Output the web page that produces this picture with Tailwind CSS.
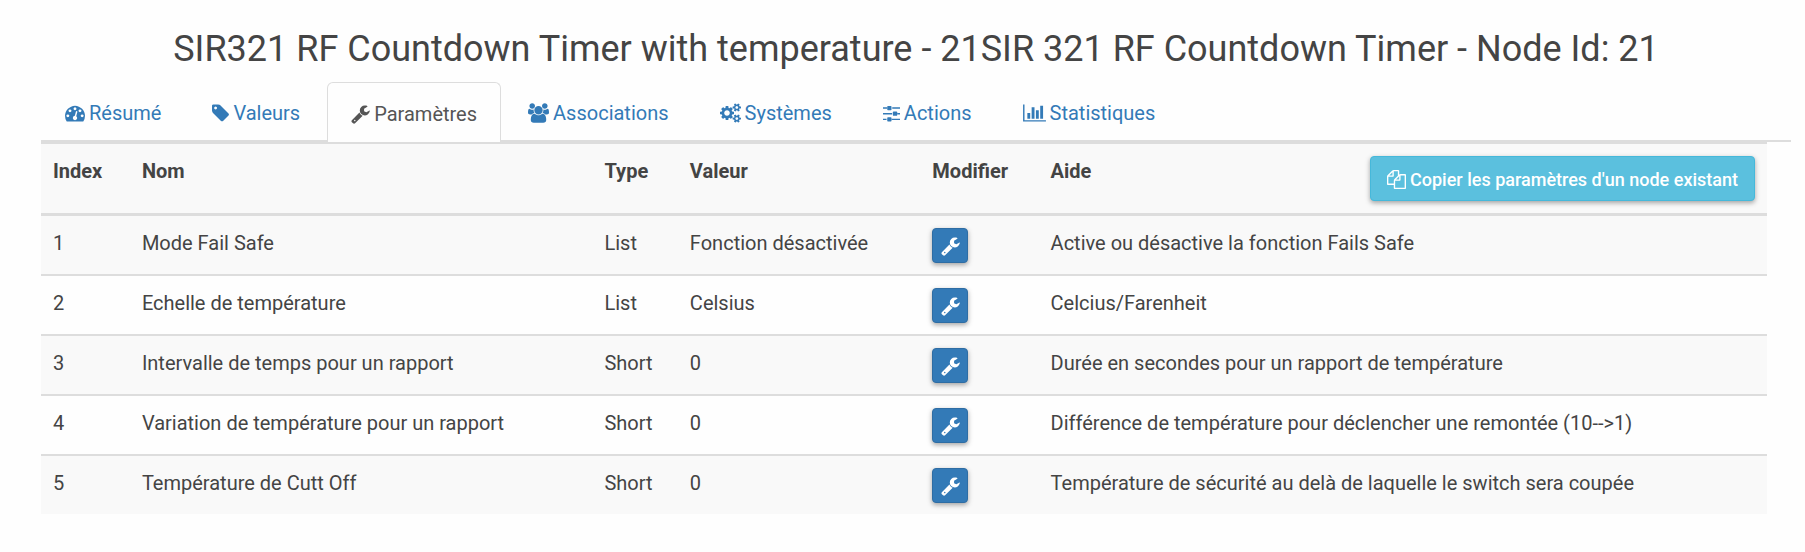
<!DOCTYPE html>
<html lang="fr">
<head>
<meta charset="utf-8">
<meta name="viewport" content="width=device-width, initial-scale=1">
<title>Node Id: 21</title>
<script src="https://cdn.jsdelivr.net/npm/@tailwindcss/browser@4"></script>
</head>
<body class="bg-[#fefefe] font-[Roboto,sans-serif] text-xl leading-[30px] text-[#444]">
<svg class="hidden" aria-hidden="true">
  <symbol id="wrench" viewBox="64 0 1664 1792"><path d="M448 1472q0-26-19-45t-45-19-45 19-19 45 19 45 45 19 45-19 19-45zm644-420l-682 682q-37 37-90 37-52 0-91-37l-106-108q-38-36-38-90 0-53 38-91l681-681q39 98 114.500 173.500t173.500 114.500zm634-435q0 39-23 106-47 134-164.500 217.500t-258.500 83.500q-185 0-316.500-131.500t-131.500-316.500 131.500-316.500 316.500-131.500q58 0 121.500 16.500t107.500 46.500q16 11 16 28t-16 28l-293 169v224l193 107q5-3 79-48.500t135.500-81 70.500-35.500q15 0 23.500 10t8.500 25z"/></symbol>
</svg>
<main class="pl-[41px] pr-[14px] pt-[25px]">
  <h1 class="text-center text-4xl leading-[48px]">SIR321 RF Countdown Timer with temperature - 21SIR 321 RF Countdown Timer - Node Id: 21</h1>

  <nav class="mt-[9px] flex gap-[3px] border-b-2 border-[#ddd] text-[#337ab7]">
    <a href="#resume" class="-mb-[2px] flex h-[60px] items-center gap-1 border border-transparent px-[23px] pt-[2px]">
      <svg class="h-5 w-5 fill-current" viewBox="0 0 1792 1792"><path d="M384 1152q0-53-37.500-90.500t-90.500-37.500-90.500 37.500-37.500 90.500 37.500 90.500 90.500 37.500 90.500-37.500 37.500-90.500zm192-448q0-53-37.500-90.500t-90.500-37.500-90.500 37.500-37.500 90.500 37.500 90.500 90.500 37.500 90.500-37.500 37.500-90.500zm428 481l101-382q6-26-7.500-48.500t-38.500-29.500-48 6.500-30 39.500l-101 382q-60 5-107 43.500t-63 98.500q-20 77 20 146t117 89 146-20 89-117q16-60-6-117t-72-91zm660-33q0-53-37.500-90.500t-90.500-37.500-90.500 37.500-37.500 90.500 37.500 90.500 90.500 37.500 90.500-37.500 37.500-90.500zm-640-640q0-53-37.500-90.500t-90.500-37.500-90.500 37.500-37.500 90.500 37.500 90.500 90.500 37.500 90.500-37.500 37.500-90.500zm448 192q0-53-37.500-90.500t-90.500-37.500-90.500 37.500-37.500 90.500 37.500 90.500 90.500 37.500 90.500-37.500 37.500-90.500zm320 448q0 261-141 483-19 29-54 29h-1402q-35 0-54-29-141-221-141-483 0-182 71-348t191-286 286-191 348-71 348 71 286 191 191 286 71 348z"/></svg>
      Résumé</a>
    <a href="#valeurs" class="-mb-[2px] flex h-[60px] items-center gap-1 border border-transparent px-[23px] pt-[2px]">
      <svg class="h-5 w-[17px] fill-current" viewBox="128 0 1520 1792"><path d="M576 448q0-53-37.500-90.500t-90.500-37.500-90.500 37.500-37.500 90.500 37.500 90.500 90.500 37.500 90.500-37.500 37.500-90.500zm1067 576q0 53-37 90l-491 492q-39 37-91 37-53 0-90-37l-715-716q-38-37-64.500-101t-26.500-117v-416q0-52 38-90t90-38h416q53 0 117 26.500t102 64.500l715 714q37 39 37 91z"/></svg>
      Valeurs</a>
    <a href="#parametres" aria-current="page" class="-mb-[2px] flex h-[60px] items-center gap-1 rounded-t-md border border-b-0 border-[#ddd] bg-[#fefefe] px-[23px] pt-[2px] text-[#555]">
      <svg class="h-5 w-[19px] fill-current"><use href="#wrench"/></svg>
      Paramètres</a>
    <a href="#associations" class="-mb-[2px] flex h-[60px] items-center gap-1 border border-transparent px-[23px] pt-[2px]">
      <svg class="h-5 w-[21px] fill-current" viewBox="0 0 1920 1792"><path d="M593 896q-162 5-265 128h-134q-82 0-138-40.500t-56-118.500q0-353 124-353 6 0 43.500 21t97.500 42.500 119 21.500q67 0 133-23-5 37-5 66 0 159 81 256zm1071 637q0 120-73 189.500t-194 69.500h-874q-121 0-194-69.500t-73-189.500q0-53 3.500-103.500t14-109 26.500-108.500 43-97.500 62-81 85.500-53.500 111.500-20q10 0 43 21.500t73 48 107 48 135 21.500 135-21.500 107-48 73-48 43-21.500q61 0 111.500 20t85.500 53.500 62 81 43 97.500 26.500 108.500 14 109 3.500 103.500zm-1024-1277q0 106-75 181t-181 75-181-75-75-181 75-181 181-75 181 75 75 181zm704 384q0 159-112.500 271.500t-271.500 112.500-271.500-112.500-112.500-271.500 112.500-271.500 271.500-112.500 271.500 112.500 112.500 271.500zm576 225q0 78-56 118.500t-138 40.500h-134q-103-123-265-128 81-97 81-256 0-29-5-66 66 23 133 23 59 0 119-21.500t97.500-42.500 43.500-21q124 0 124 353zm-128-609q0 106-75 181t-181 75-181-75-75-181 75-181 181-75 181 75 75 181z"/></svg>
      Associations</a>
    <a href="#systemes" class="-mb-[2px] flex h-[60px] items-center gap-1 border border-transparent px-[23px] pt-[2px]">
      <svg class="h-5 w-[21px] fill-current" viewBox="0 0 1920 1792"><path d="M896 896q0-106-75-181t-181-75-181 75-75 181 75 181 181 75 181-75 75-181zm768 512q0-52-38-90t-90-38-90 38-38 90q0 53 37.500 90.500t90.500 37.500 90.500-37.500 37.500-90.500zm0-1024q0-52-38-90t-90-38-90 38-38 90q0 53 37.500 90.500t90.500 37.500 90.500-37.500 37.500-90.500zm-384 421v185q0 10-7 19.500t-16 10.500l-155 24q-11 35-32 76 34 48 90 115 7 11 7 20 0 12-7 19-23 30-82.500 89.500t-78.500 59.500q-11 0-21-7l-115-90q-37 19-77 31-11 108-23 155-7 24-30 24h-186q-11 0-20-7.500t-10-17.500l-23-153q-34-10-75-31l-118 89q-7 7-20 7-11 0-21-8-144-133-144-160 0-9 7-19 10-14 41-53t47-61q-23-44-35-82l-152-24q-10-1-17-9.500t-7-19.500v-185q0-10 7-19.500t16-10.500l155-24q11-35 32-76-34-48-90-115-7-11-7-20 0-12 7-20 22-30 82-89t79-59q11 0 21 7l115 90q34-18 77-32 11-108 23-154 7-24 30-24h186q11 0 20 7.500t10 17.500l23 153q34 10 75 31l118-89q8-7 20-7 11 0 21 8 144 133 144 160 0 8-7 19-12 16-42 54t-45 60q23 48 34 82l152 23q10 2 17 10.500t7 19.500zm640 533v140q0 16-149 31-12 27-30 52 51 113 51 138 0 4-4 7-122 71-124 71-8 0-46-47t-52-68q-20 2-30 2t-30-2q-14 21-52 68t-46 47q-2 0-124-71-4-3-4-7 0-25 51-138-18-25-30-52-149-15-149-31v-140q0-16 149-31 13-29 30-52-51-113-51-138 0-4 4-7 4-2 35-20t59-34 30-16q8 0 46 46.500t52 67.500q20-2 30-2t30 2q51-71 92-112l6-2q4 0 124 70 4 3 4 7 0 25-51 138 17 23 30 52 149 15 149 31zm0-1024v140q0 16-149 31-12 27-30 52 51 113 51 138 0 4-4 7-122 71-124 71-8 0-46-47t-52-68q-20 2-30 2t-30-2q-14 21-52 68t-46 47q-2 0-124-71-4-3-4-7 0-25 51-138-18-25-30-52-149-15-149-31v-140q0-16 149-31 13-29 30-52-51-113-51-138 0-4 4-7 4-2 35-20t59-34 30-16q8 0 46 46.500t52 67.500q20-2 30-2t30 2q51-71 92-112l6-2q4 0 124 70 4 3 4 7 0 25-51 138 17 23 30 52 149 15 149 31z"/></svg>
      Systèmes</a>
    <a href="#actions" class="-mb-[2px] flex h-[60px] items-center gap-1 border border-transparent px-[23px] pt-[2px]">
      <svg class="h-5 w-[17px] fill-current" viewBox="128 0 1536 1792"><path d="M128 384h384v128H128zM960 384h704v128H960zM128 896h832v128H128zM1408 896h256v128h-256zM128 1408h320v128H128zM896 1408h768v128H896z"/><rect x="512" y="256" width="384" height="384" rx="64"/><rect x="1024" y="768" width="384" height="384" rx="64"/><rect x="512" y="1280" width="384" height="384" rx="64"/></svg>
      Actions</a>
    <a href="#statistiques" class="-mb-[2px] flex h-[60px] items-center gap-1 border border-transparent px-[23px] pt-[2px]">
      <svg class="h-5 w-[23px] fill-current" viewBox="0 0 2048 1792"><path d="M640 896v512h-256v-512h256zm384-512v1024h-256v-1024h256zm1024 1152v128h-2048v-1536h128v1408h1920zm-640-896v768h-256v-768h256zm384-384v1152h-256v-1152h256z"/></svg>
      Statistiques</a>
  </nav>

  <div class="pr-6">
  <table class="w-full table-fixed border-separate border-spacing-0 border-t-2 border-[#ddd] text-left [&_td]:px-3 [&_td]:pt-3 [&_td]:pb-[11px] [&_td]:align-top [&_th]:border-b-[3px] [&_th]:border-[#ddd] [&_th]:px-3 [&_th]:py-3 [&_th]:align-top [&_tr+tr_td]:border-t-2 [&_tr+tr_td]:border-[#ddd]">
    <thead>
      <tr class="bg-[#f9f9f9]">
        <th scope="col" class="w-[5.15%]">Index</th>
        <th scope="col" class="w-[26.8%]">Nom</th>
        <th scope="col" class="w-[4.95%]">Type</th>
        <th scope="col" class="w-[14.05%]">Valeur</th>
        <th scope="col" class="w-[6.85%]">Modifier</th>
        <th scope="col"><div class="flex items-start justify-between">Aide
          <button type="button" class="flex h-[45px] items-center gap-1 rounded border border-[#46b8da] bg-[#5bc0de] px-4 pt-[2px] text-lg font-medium text-white shadow-[0_2px_5px_rgba(0,0,0,0.35)]">
            <svg class="size-[19px] fill-current" viewBox="0 0 1792 1792"><path d="M1696 384q40 0 68 28t28 68v1216q0 40-28 68t-68 28h-960q-40 0-68-28t-28-68v-288h-544q-40 0-68-28t-28-68v-672q0-40 20-88t48-76l408-408q28-28 76-48t88-20h416q40 0 68 28t28 68v328q68-40 128-40h416zm-544 213l-299 299h299v-299zm-640-384l-299 299h299v-299zm196 647l316-316v-416h-384v416q0 40-28 68t-68 28h-416v640h512v-256q0-40 20-88t48-76zm956 804v-1152h-384v416q0 40-28 68t-68 28h-416v640h896z"/></svg>
            Copier les paramètres d'un node existant</button></div></th>
      </tr>
    </thead>
    <tbody>
      <tr class="bg-[#f9f9f9]"><td>1</td><td>Mode Fail Safe</td><td>List</td><td>Fonction désactivée</td>
        <td><button type="button" aria-label="Modifier Mode Fail Safe" class="flex h-[35px] w-9 items-center justify-center rounded border border-[#2e6da4] bg-[#337ab7] text-white shadow-[0_2px_5px_rgba(0,0,0,0.35)]"><svg class="h-5 w-[19px] fill-current"><use href="#wrench"/></svg></button></td>
        <td>Active ou désactive la fonction Fails Safe</td></tr>
      <tr><td>2</td><td>Echelle de température</td><td>List</td><td>Celsius</td>
        <td><button type="button" aria-label="Modifier Echelle de température" class="flex h-[35px] w-9 items-center justify-center rounded border border-[#2e6da4] bg-[#337ab7] text-white shadow-[0_2px_5px_rgba(0,0,0,0.35)]"><svg class="h-5 w-[19px] fill-current"><use href="#wrench"/></svg></button></td>
        <td>Celcius/Farenheit</td></tr>
      <tr class="bg-[#f9f9f9]"><td>3</td><td>Intervalle de temps pour un rapport</td><td>Short</td><td>0</td>
        <td><button type="button" aria-label="Modifier Intervalle de temps pour un rapport" class="flex h-[35px] w-9 items-center justify-center rounded border border-[#2e6da4] bg-[#337ab7] text-white shadow-[0_2px_5px_rgba(0,0,0,0.35)]"><svg class="h-5 w-[19px] fill-current"><use href="#wrench"/></svg></button></td>
        <td>Durée en secondes pour un rapport de température</td></tr>
      <tr><td>4</td><td>Variation de température pour un rapport</td><td>Short</td><td>0</td>
        <td><button type="button" aria-label="Modifier Variation de température pour un rapport" class="flex h-[35px] w-9 items-center justify-center rounded border border-[#2e6da4] bg-[#337ab7] text-white shadow-[0_2px_5px_rgba(0,0,0,0.35)]"><svg class="h-5 w-[19px] fill-current"><use href="#wrench"/></svg></button></td>
        <td>Différence de température pour déclencher une remontée (10--&gt;1)</td></tr>
      <tr class="bg-[#f9f9f9]"><td>5</td><td>Température de Cutt Off</td><td>Short</td><td>0</td>
        <td><button type="button" aria-label="Modifier Température de Cutt Off" class="flex h-[35px] w-9 items-center justify-center rounded border border-[#2e6da4] bg-[#337ab7] text-white shadow-[0_2px_5px_rgba(0,0,0,0.35)]"><svg class="h-5 w-[19px] fill-current"><use href="#wrench"/></svg></button></td>
        <td>Température de sécurité au delà de laquelle le switch sera coupée</td></tr>
    </tbody>
  </table>
  </div>
</main>
</body>
</html>
